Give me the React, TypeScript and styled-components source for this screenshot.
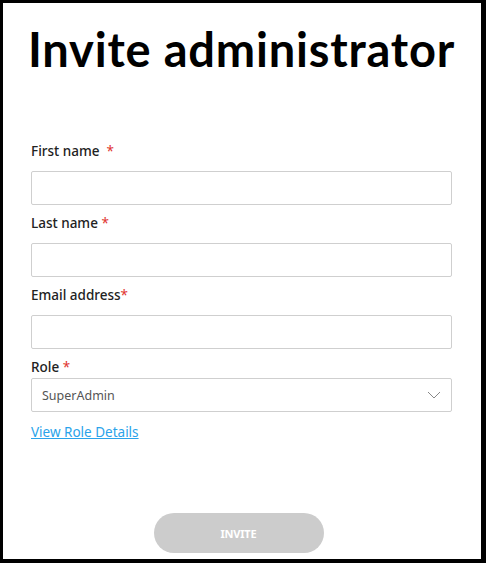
import React from "react";
import styled, { createGlobalStyle } from "styled-components";

const Global = createGlobalStyle`
  html, body { margin: 0; padding: 0; background: #fff; }
  * { box-sizing: border-box; }
`;

const Frame = styled.div`
  width: 486px;
  height: 563px;
  border-style: solid;
  border-color: #000;
  border-width: 3px 5px 4px 3px;
  background: #fff;
  display: flex;
  flex-direction: column;
  padding: 0 29px 0 28px;
  font-family: "Noto Sans", "Open Sans", sans-serif;
`;

const Title = styled.h1`
  margin: 18px -20px 0;
  font-family: Lato, "Noto Sans", sans-serif;
  font-weight: 700;
  font-size: 47px;
  line-height: 56px;
  text-align: center;
  color: #000;
  letter-spacing: 0.8px;
  white-space: nowrap;
`;

const Form = styled.div`
  display: flex;
  flex-direction: column;
  margin-top: 64px;
`;

const Label = styled.div<{ $tight?: boolean }>`
  font-size: 13.5px;
  line-height: 20px;
  font-weight: 500;
  color: #222;
  margin-bottom: ${(p) => (p.$tight ? "1px" : "10px")};
  white-space: pre;
`;

const Req = styled.span`
  color: #e0332e;
  font-weight: 400;
`;

const Input = styled.input`
  display: block;
  width: 100%;
  height: 34px;
  border: 1px solid #cfcfcf;
  border-radius: 2px;
  background: #fff;
  margin: 0 0 8px;
  padding: 0 10px;
  font-family: inherit;
  font-size: 13px;
  outline: none;
`;

const SelectBox = styled.div`
  position: relative;
  height: 34px;
  border: 1px solid #cfcfcf;
  border-radius: 2px;
  display: flex;
  align-items: center;
  justify-content: space-between;
  padding: 0 10px 0 10px;
  font-size: 12.5px;
  color: #555;
`;

const Link = styled.a`
  margin-top: 10px;
  align-self: flex-start;
  font-size: 13.5px;
  line-height: 20px;
  color: #2aa3ea;
  text-decoration: underline;
  cursor: pointer;
`;

const ButtonRow = styled.div`
  display: flex;
  justify-content: center;
  margin-top: 71px;
  padding-right: 6px;
`;

const InviteButton = styled.button`
  width: 170px;
  height: 40px;
  border: none;
  border-radius: 20px;
  background: #cccccc;
  color: #fff;
  font-family: "Noto Sans", sans-serif;
  font-weight: 700;
  font-size: 11px;
  letter-spacing: -0.2px;
`;

const Chevron = () => (
  <svg width="14" height="8" viewBox="0 0 14 8" fill="none">
    <path d="M1 1l6 6 6-6" stroke="#888" strokeWidth="1" />
  </svg>
);

export default function App() {
  return (
    <>
      <Global />
      <Frame>
        <Title>Invite administrator</Title>
        <Form>
          <Label>
            First name  <Req>*</Req>
          </Label>
          <Input />
          <Label>
            Last name <Req>*</Req>
          </Label>
          <Input />
          <Label>
            Email address<Req>*</Req>
          </Label>
          <Input />
          <Label $tight>
            Role <Req>*</Req>
          </Label>
          <SelectBox>
            <span>SuperAdmin</span>
            <Chevron />
          </SelectBox>
          <Link>View Role Details</Link>
        </Form>
        <ButtonRow>
          <InviteButton>INVITE</InviteButton>
        </ButtonRow>
      </Frame>
    </>
  );
}
